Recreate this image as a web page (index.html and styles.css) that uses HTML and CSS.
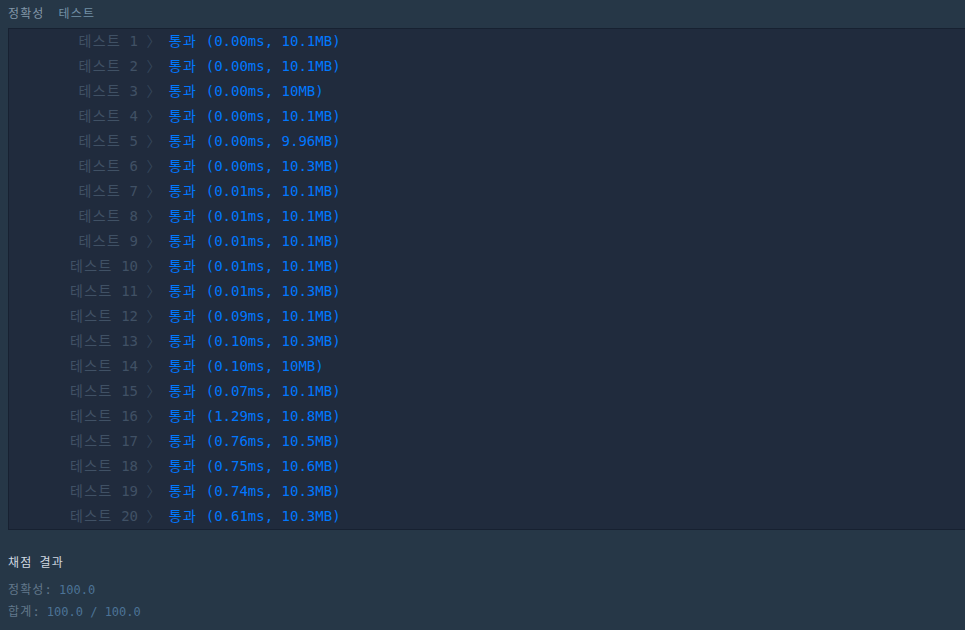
FILE: index.html
```html
<!DOCTYPE html>
<html lang="ko">
<head>
<meta charset="utf-8">
<link rel="stylesheet" href="styles.css">
</head>
<body>
<div class="console">
  <div class="tab-title"><span class="ko">정확성</span><span class="ko tab-sep">테스트</span></div>
  <div class="results">
    <div class="row"><span class="name"><span class="ko">테스트</span> 1</span><span class="arrow"> 〉 </span><span class="pass"><span class="ko">통과</span> (0.00ms, 10.1MB)</span></div>
    <div class="row"><span class="name"><span class="ko">테스트</span> 2</span><span class="arrow"> 〉 </span><span class="pass"><span class="ko">통과</span> (0.00ms, 10.1MB)</span></div>
    <div class="row"><span class="name"><span class="ko">테스트</span> 3</span><span class="arrow"> 〉 </span><span class="pass"><span class="ko">통과</span> (0.00ms, 10MB)</span></div>
    <div class="row"><span class="name"><span class="ko">테스트</span> 4</span><span class="arrow"> 〉 </span><span class="pass"><span class="ko">통과</span> (0.00ms, 10.1MB)</span></div>
    <div class="row"><span class="name"><span class="ko">테스트</span> 5</span><span class="arrow"> 〉 </span><span class="pass"><span class="ko">통과</span> (0.00ms, 9.96MB)</span></div>
    <div class="row"><span class="name"><span class="ko">테스트</span> 6</span><span class="arrow"> 〉 </span><span class="pass"><span class="ko">통과</span> (0.00ms, 10.3MB)</span></div>
    <div class="row"><span class="name"><span class="ko">테스트</span> 7</span><span class="arrow"> 〉 </span><span class="pass"><span class="ko">통과</span> (0.01ms, 10.1MB)</span></div>
    <div class="row"><span class="name"><span class="ko">테스트</span> 8</span><span class="arrow"> 〉 </span><span class="pass"><span class="ko">통과</span> (0.01ms, 10.1MB)</span></div>
    <div class="row"><span class="name"><span class="ko">테스트</span> 9</span><span class="arrow"> 〉 </span><span class="pass"><span class="ko">통과</span> (0.01ms, 10.1MB)</span></div>
    <div class="row"><span class="name"><span class="ko">테스트</span> 10</span><span class="arrow"> 〉 </span><span class="pass"><span class="ko">통과</span> (0.01ms, 10.1MB)</span></div>
    <div class="row"><span class="name"><span class="ko">테스트</span> 11</span><span class="arrow"> 〉 </span><span class="pass"><span class="ko">통과</span> (0.01ms, 10.3MB)</span></div>
    <div class="row"><span class="name"><span class="ko">테스트</span> 12</span><span class="arrow"> 〉 </span><span class="pass"><span class="ko">통과</span> (0.09ms, 10.1MB)</span></div>
    <div class="row"><span class="name"><span class="ko">테스트</span> 13</span><span class="arrow"> 〉 </span><span class="pass"><span class="ko">통과</span> (0.10ms, 10.3MB)</span></div>
    <div class="row"><span class="name"><span class="ko">테스트</span> 14</span><span class="arrow"> 〉 </span><span class="pass"><span class="ko">통과</span> (0.10ms, 10MB)</span></div>
    <div class="row"><span class="name"><span class="ko">테스트</span> 15</span><span class="arrow"> 〉 </span><span class="pass"><span class="ko">통과</span> (0.07ms, 10.1MB)</span></div>
    <div class="row"><span class="name"><span class="ko">테스트</span> 16</span><span class="arrow"> 〉 </span><span class="pass"><span class="ko">통과</span> (1.29ms, 10.8MB)</span></div>
    <div class="row"><span class="name"><span class="ko">테스트</span> 17</span><span class="arrow"> 〉 </span><span class="pass"><span class="ko">통과</span> (0.76ms, 10.5MB)</span></div>
    <div class="row"><span class="name"><span class="ko">테스트</span> 18</span><span class="arrow"> 〉 </span><span class="pass"><span class="ko">통과</span> (0.75ms, 10.6MB)</span></div>
    <div class="row"><span class="name"><span class="ko">테스트</span> 19</span><span class="arrow"> 〉 </span><span class="pass"><span class="ko">통과</span> (0.74ms, 10.3MB)</span></div>
    <div class="row"><span class="name"><span class="ko">테스트</span> 20</span><span class="arrow"> 〉 </span><span class="pass"><span class="ko">통과</span> (0.61ms, 10.3MB)</span></div>
  </div>
  <div class="summary">
    <div class="summary-title"><span class="ko">채점</span> <span class="ko">결과</span></div>
    <div class="summary-line"><span class="label"><span class="ko">정확성</span>: </span><span class="value">100.0</span></div>
    <div class="summary-line"><span class="label"><span class="ko">합계</span>: </span><span class="value">100.0 / 100.0</span></div>
  </div>
</div>
</body>
</html>
```
FILE: styles.css
```css
html, body {
  margin: 0;
  padding: 0;
  background: #263747;
  overflow: hidden;
}
body {
  font-family: "DejaVu Sans Mono", "Noto Sans CJK KR", monospace;
  width: 965px;
  height: 630px;
}
.ko {
  letter-spacing: 0.095em;
}
.console {
  padding-left: 8px;
}
.tab-title {
  height: 28px;
  line-height: 28px;
  font-size: 12px;
  color: #8296a8;
  display: flex;
}
.tab-sep {
  margin-left: 14px;
  color: #7390a6;
}
.results {
  background: #202b3d;
  border: 1px solid #172131;
  border-right: none;
  margin-right: -20px;
  font-size: 14px;
}
.row {
  height: 25px;
  line-height: 25px;
  display: flex;
  white-space: pre;
}
.name {
  width: 129px;
  text-align: right;
  color: #405165;
}
.arrow {
  color: #34455a;
}
.pass {
  color: #0078ff;
}
.summary {
  padding-top: 22px;
  font-size: 12px;
}
.summary-title {
  height: 22px;
  line-height: 22px;
  color: #d0d8e0;
  margin-bottom: 5px;
}
.summary-line {
  height: 22px;
  line-height: 22px;
  white-space: pre;
}
.label {
  color: #62788b;
}
.value {
  color: #4c7396;
}
```
